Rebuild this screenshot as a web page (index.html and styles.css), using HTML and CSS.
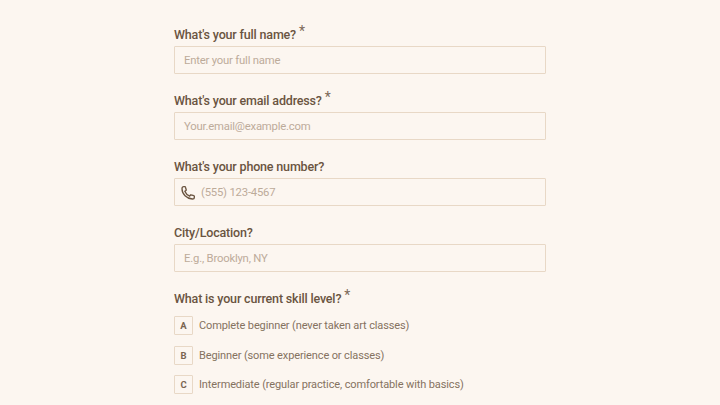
FILE: index.html
```html
<!DOCTYPE html>
<html lang="en">
<head>
    <meta charset="UTF-8">
    <meta name="viewport" content="width=device-width, initial-scale=1.0">
    <title>Art Class Sign Up</title>
    <link rel="stylesheet" href="styles.css">
</head>
<body>
    <form class="signup-form">
        <div class="field">
            <label class="field-label">What's your full name? <span class="required">*</span></label>
            <div class="input-box"><span class="placeholder">Enter your full name</span></div>
        </div>
        <div class="field">
            <label class="field-label">What's your email address? <span class="required">*</span></label>
            <div class="input-box"><span class="placeholder">Your.email@example.com</span></div>
        </div>
        <div class="field">
            <label class="field-label">What's your phone number?</label>
            <div class="input-box phone">
                <svg class="phone-icon" viewBox="0 0 24 24" fill="none" stroke="currentColor" stroke-width="2" stroke-linecap="round" stroke-linejoin="round">
                    <path d="M3 5.5C3 4 4.2 2.5 5.8 2.5h1.4c.5 0 .9.3 1 .8l1.1 3.900c.1.4 0 .8-.3 1L7.200 9.500c1.300 3.200 3.900 5.800 7.300 7.300l1.300-1.800c.3-.3.700-.4 1-.3l3.900 1.100c.5.100.8.500.8 1v1.400c0 1.600-1.500 2.800-3 2.800C10 20.500 3 13.500 3 5.500z"/>
                </svg>
                <span class="placeholder">(555) 123-4567</span>
            </div>
        </div>
        <div class="field">
            <label class="field-label">City/Location?</label>
            <div class="input-box"><span class="placeholder">E.g., Brooklyn, NY</span></div>
        </div>
        <div class="field">
            <label class="field-label">What is your current skill level? <span class="required">*</span></label>
            <div class="options">
                <div class="option"><span class="option-key">A</span>Complete beginner (never taken art classes)</div>
                <div class="option"><span class="option-key">B</span>Beginner (some experience or classes)</div>
                <div class="option"><span class="option-key">C</span>Intermediate (regular practice, comfortable with basics)</div>
            </div>
        </div>
    </form>
</body>
</html>
```

FILE: styles.css
```css
body {
    font-family: 'Roboto', 'Liberation Sans', sans-serif;
    background-color: #fcf6f0;
    color: #6a5440;
    margin: 0;
    height: 405px;
    overflow: hidden;
}

.signup-form {
    width: 372px;
    margin: 0 auto;
    padding-top: 24px;
}

.field {
    margin-bottom: 16px;
}

.field-label {
    display: block;
    height: 22px;
    line-height: 21px;
    font-size: 12.5px;
    font-weight: 500;
    letter-spacing: -0.17px;
}

.required {
    font-size: 14px;
    font-weight: 400;
    line-height: 10px;
    color: #7d6a59;
    position: relative;
    top: -3px;
}

.input-box {
    display: flex;
    align-items: center;
    height: 28px;
    box-sizing: border-box;
    padding: 1px 9px 0;
    border: 1px solid #e8d8c6;
    border-radius: 1px;
}

.input-box.phone {
    padding-left: 5px;
    gap: 5px;
}

.phone-icon {
    width: 16px;
    height: 16px;
    color: #6a5440;
}

.placeholder {
    font-size: 11.3px;
    color: #bcab9a;
    letter-spacing: -0.2px;
}

.options {
    display: flex;
    flex-direction: column;
    gap: 10.5px;
    padding-top: 6px;
}

.option {
    display: flex;
    align-items: center;
    gap: 6px;
    height: 19px;
    font-size: 11px;
    color: #85725f;
    letter-spacing: -0.12px;
}

.option-key {
    width: 19px;
    height: 19px;
    box-sizing: border-box;
    display: flex;
    align-items: center;
    justify-content: center;
    border: 1px solid #e8d8c6;
    border-radius: 1px;
    font-size: 9.5px;
    font-weight: 700;
    color: #7a6551;
}
```
